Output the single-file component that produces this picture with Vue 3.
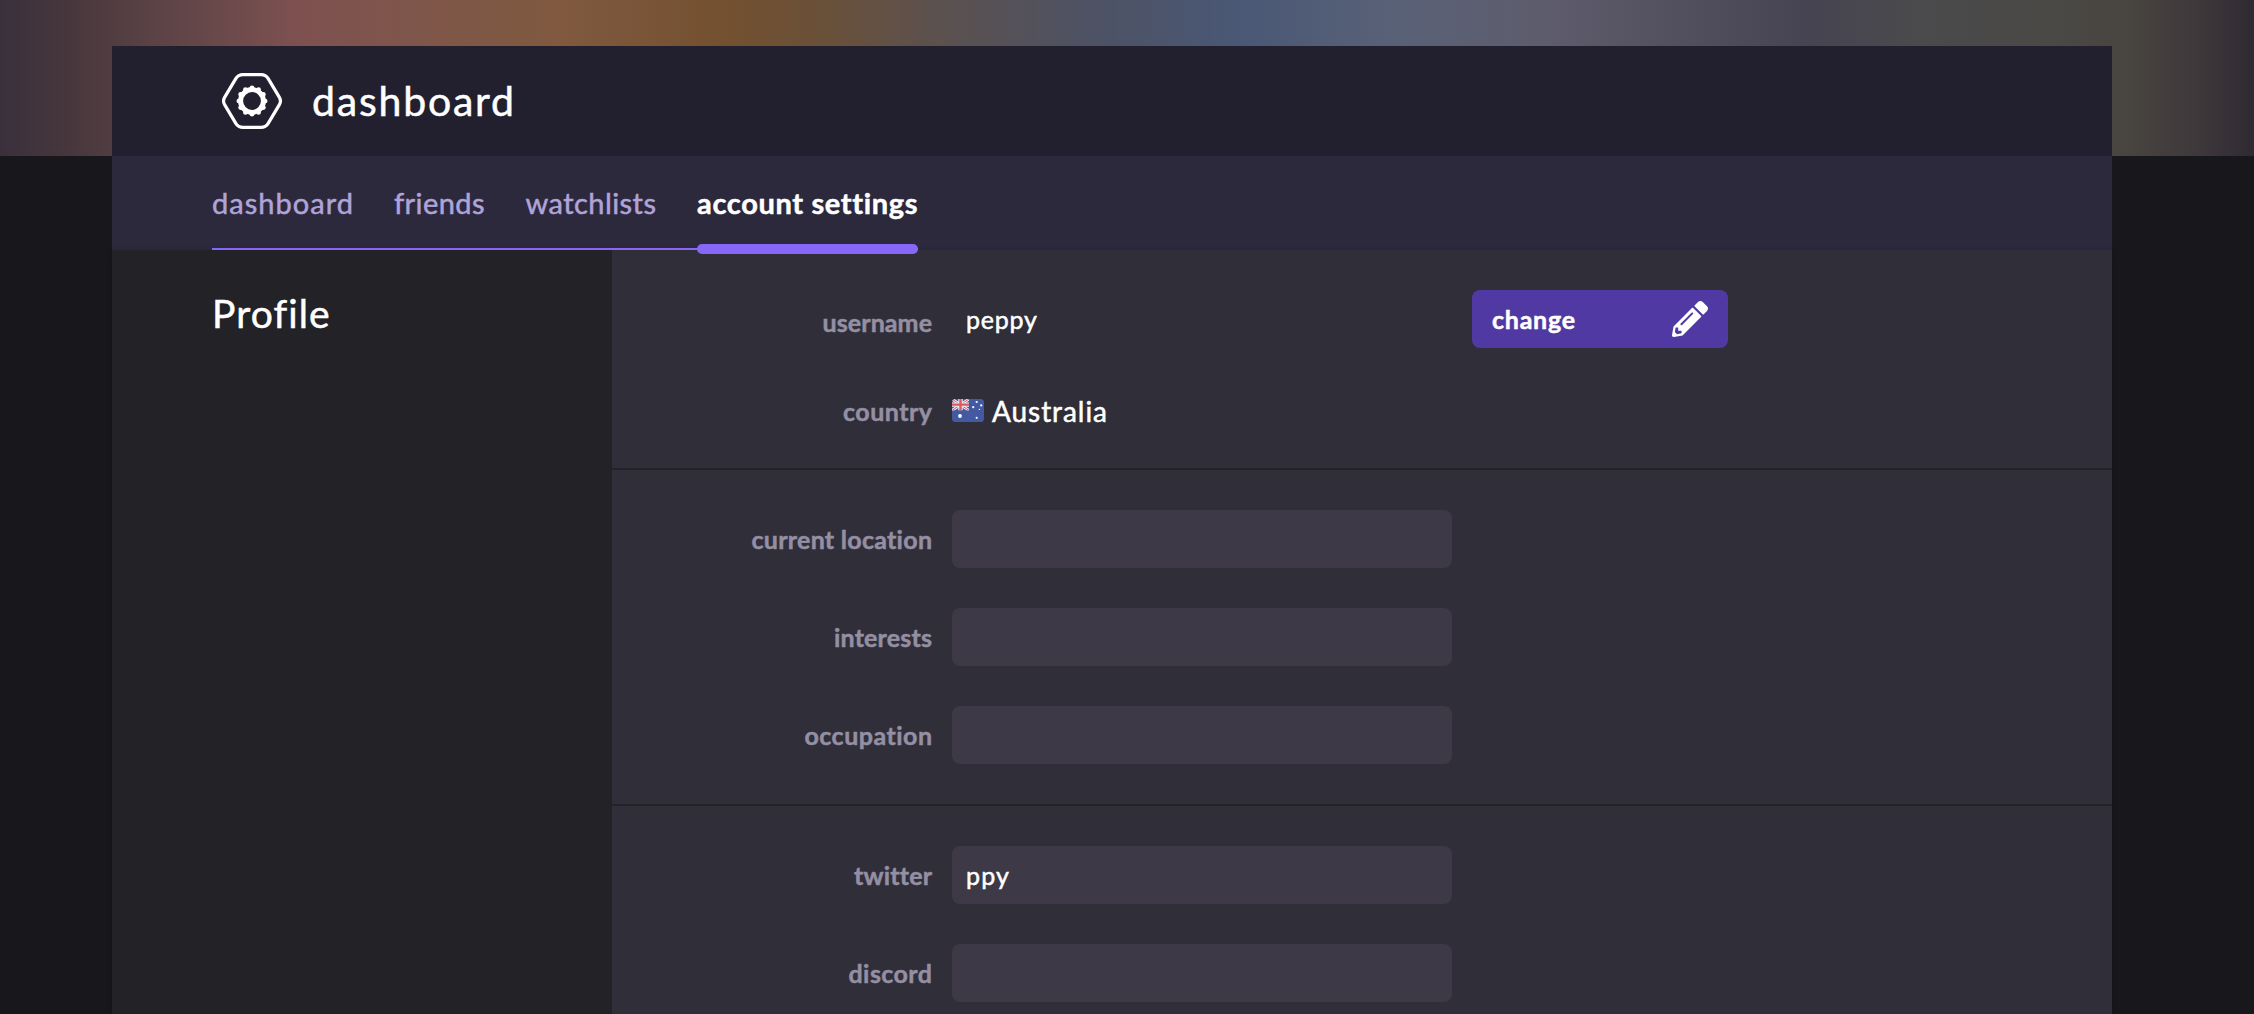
<script setup>
import { nextTick } from 'vue'

const tabs = [
  { label: 'dashboard', width: 141 },
  { label: 'friends', width: 90.5 },
  { label: 'watchlists', width: 130.5 },
  { label: 'account settings', width: 219.5, active: true },
]

const groups = [
  [
    { label: 'current location', width: 181 },
    { label: 'interests', width: 98 },
    { label: 'occupation', width: 128 },
  ],
  [
    { label: 'twitter', width: 77, value: 'ppy', valueWidth: 43 },
    { label: 'discord', width: 83.5 },
  ],
]

// Spreads the tracking of a single-line text over the given width.
const vTrack = {
  mounted(el, { value }) {
    if (!value) return
    nextTick(() => {
      const count = el.textContent.trim().length
      const spacing = (value - el.getBoundingClientRect().width) / (count - 1)
      el.style.letterSpacing = `${spacing}px`
      el.style.marginRight = `${-spacing}px`
    })
  },
}

const teeth = Array.from({ length: 12 }, (_, i) => {
  const a = (i * Math.PI) / 6
  return { x: 32 + 13.2 * Math.sin(a), y: 30 - 13.2 * Math.cos(a) }
})
</script>

<template>
  <div class="page">
    <div class="cover"></div>
    <div class="panel">
      <header class="header">
        <svg class="logo" viewBox="0 0 64 60" width="64" height="60">
          <path
            d="M23 3.6H41Q45.8 3.6 48.2 7.6L59.4 26.4Q61.5 30 59.4 33.6L48.2 52.4Q45.8 56.4 41 56.4H23Q18.2 56.4 15.8 52.4L4.6 33.6Q2.5 30 4.6 26.4L15.8 7.6Q18.2 3.6 23 3.6Z"
            fill="none" stroke="#fff" stroke-width="3.2"
          />
          <circle cx="32" cy="30" r="11.4" fill="none" stroke="#fff" stroke-width="5" />
          <circle v-for="(t, i) in teeth" :key="i" :cx="t.x" :cy="t.y" r="2.3" fill="#fff" />
        </svg>
        <h1 class="title"><span v-track="202" class="txt">dashboard</span></h1>
      </header>

      <nav class="tabs">
        <ul class="tab-list">
          <li v-for="tab in tabs" :key="tab.label" class="tab" :class="{ active: tab.active }">
            <span v-track="tab.width" class="txt">{{ tab.label }}</span>
          </li>
        </ul>
      </nav>

      <div class="body">
        <aside class="side">
          <h2 class="side-title"><span v-track="117" class="txt">Profile</span></h2>
        </aside>
        <main class="main">
          <section class="group">
            <div class="row">
              <div class="label low"><span v-track="109.5" class="txt">username</span></div>
              <div class="field"><span v-track="71" class="txt">peppy</span></div>
              <button class="change">
                <span v-track="83" class="txt">change</span>
                <svg viewBox="0 0 512 512" width="36" height="36" fill="#fff">
                  <path
                    d="M497.9 142.1l-46.1 46.1c-4.7 4.7-12.3 4.7-17 0l-111-111c-4.7-4.7-4.7-12.3 0-17l46.1-46.1c18.7-18.7 49.1-18.7 67.9 0l60.1 60.1c18.8 18.7 18.8 49.1 0 67.9zM284.2 99.8L21.6 362.4.4 483.9c-2.9 16.4 11.4 30.6 27.8 27.8l121.5-21.3 262.6-262.6c4.7-4.7 4.7-12.3 0-17l-111-111c-4.8-4.7-12.4-4.7-17.1 0zM124.1 339.9c-5.5-5.5-5.5-14.3 0-19.8l154-154c5.5-5.5 14.3-5.5 19.8 0s5.5 14.3 0 19.8l-154 154c-5.5 5.5-14.3 5.5-19.8 0zM88 424h48v36.3l-64.5 11.3-31.1-31.1L51.7 376H88v48z"
                  />
                </svg>
              </button>
            </div>
            <div class="row country">
              <div class="label"><span v-track="89" class="txt">country</span></div>
              <div class="nation">
                <svg class="flag" viewBox="0 0 32 23" width="32" height="23">
                  <defs>
                    <clipPath id="flag-shape"><rect width="32" height="23" rx="3.6" /></clipPath>
                    <clipPath id="canton"><rect width="17" height="11.5" /></clipPath>
                  </defs>
                  <g clip-path="url(#flag-shape)">
                    <rect width="32" height="23" fill="#4359a2" />
                    <g clip-path="url(#canton)">
                      <path d="M0 0L17 11.5M17 0L0 11.5" stroke="#eee" stroke-width="2.8" />
                      <path d="M0 0L17 11.5M17 0L0 11.5" stroke="#dc5863" stroke-width="1" />
                      <path d="M8.5 0V11.5M0 5.6H17" stroke="#eee" stroke-width="4.4" />
                      <path d="M8.5 0V11.5M0 5.6H17" stroke="#dc5863" stroke-width="2.4" />
                    </g>
                    <g fill="#fff">
                      <circle cx="8" cy="17" r="1.9" />
                      <circle cx="21.2" cy="8.2" r="1.1" />
                      <circle cx="24.7" cy="3" r="1.1" />
                      <circle cx="29.2" cy="6.4" r="1.1" />
                      <circle cx="27.4" cy="10.4" r=".7" />
                      <circle cx="24.7" cy="18.8" r="1.1" />
                    </g>
                  </g>
                </svg>
                <span v-track="115" class="txt">Australia</span>
              </div>
            </div>
          </section>

          <section v-for="(rows, g) in groups" :key="g" class="group">
            <div v-for="row in rows" :key="row.label" class="row">
              <div class="label"><span v-track="row.width" class="txt">{{ row.label }}</span></div>
              <div class="field filled"><span v-if="row.value" v-track="row.valueWidth" class="txt">{{ row.value }}</span></div>
            </div>
          </section>
        </main>
      </div>
    </div>
  </div>
</template>

<style>
body {
  margin: 0;
  background: #18171c;
}
</style>

<style scoped>
.page {
  box-sizing: border-box;
  position: relative;
  width: 2254px;
  height: 1014px;
  padding-top: 46px;
  overflow: hidden;
  background: #18171c;
  color: #fff;
  font-family: Lato, "Open Sans", sans-serif;
}
.cover {
  position: absolute;
  inset: 0 0 auto;
  height: 156px;
  background:
    linear-gradient(90deg, #3a303c 0, #45363c 60px, #5c4346 160px, #7e5150 300px, #7f5748 450px,
      #80593f 560px, #735030 730px, #69503a 830px, #5a5150 950px, #4d5265 1100px, #4a5875 1240px,
      #596177 1400px, #5e5c6c 1550px, #524f5e 1680px, #464452 1810px, #4b4a4c 1920px,
      #4a4946 2050px, #48443f 2130px, #3e383b 2200px, #2f2a33 2254px);
}
.panel {
  position: relative;
  width: 2000px;
  height: 968px;
  margin-left: 112px;
}
.txt {
  display: inline-block;
  white-space: nowrap;
  -webkit-text-stroke: 0.5px currentColor;
}
.header {
  box-sizing: border-box;
  display: flex;
  align-items: center;
  gap: 28px;
  height: 110px;
  padding-left: 108px;
  background: #221f2e;
}
.logo {
  display: block;
}
.title {
  margin: 0;
  font-size: 41px;
  font-weight: 400;
  line-height: 48px;
}
.tabs {
  display: flex;
  height: 94px;
  padding-left: 100px;
  background: #2d293d;
}
.tab-list {
  box-sizing: border-box;
  display: flex;
  gap: 41px;
  height: 94px;
  margin: 0;
  padding: 0;
  border-bottom: 2px solid #8667f8;
  list-style: none;
}
.tab {
  position: relative;
  color: #afa4d9;
  font-size: 29px;
  line-height: 94px;
}
.active {
  color: #fff;
  font-weight: 700;
}
.active::after {
  content: "";
  position: absolute;
  z-index: 1;
  top: 88px;
  left: 0;
  right: 0;
  height: 10px;
  border-radius: 5px;
  background: #8667f8;
}
.body {
  display: flex;
  height: 764px;
  box-shadow: 0 2px 6px rgba(0, 0, 0, 0.2);
}
.side {
  box-sizing: border-box;
  width: 500px;
  padding: 40px 0 0 100px;
  background: #232227;
}
.side-title {
  margin: 0;
  font-size: 39px;
  font-weight: 400;
  line-height: 46px;
}
.main {
  width: 1500px;
  background: #302e38;
}
.group {
  display: flex;
  flex-direction: column;
  gap: 40px;
  padding: 40px 0;
  border-bottom: 2px solid #232227;
}
.row {
  display: flex;
  align-items: center;
  height: 58px;
}
.country {
  box-sizing: border-box;
  height: 40px;
  padding-top: 5px;
}
.label {
  width: 320px;
  margin-right: 20px;
  color: #948fa3;
  font-size: 25px;
  font-weight: 700;
  line-height: 58px;
  text-align: right;
}
.low {
  padding-top: 5px;
}
.field {
  box-sizing: border-box;
  width: 500px;
  height: 58px;
  padding-left: 14px;
  border-radius: 8px;
  font-size: 25px;
  line-height: 58px;
}
.filled {
  background: #3d3946;
}
.change {
  box-sizing: border-box;
  display: flex;
  align-items: center;
  justify-content: space-between;
  width: 256px;
  height: 58px;
  margin-left: 20px;
  padding: 0 20px;
  border: 0;
  border-radius: 8px;
  background: #5139a3;
  color: #fff;
  font: 700 25px/56px Lato, "Open Sans", sans-serif;
}
.nation {
  display: flex;
  align-items: center;
  gap: 8px;
  font-size: 28px;
}
.flag {
  display: block;
}
</style>
